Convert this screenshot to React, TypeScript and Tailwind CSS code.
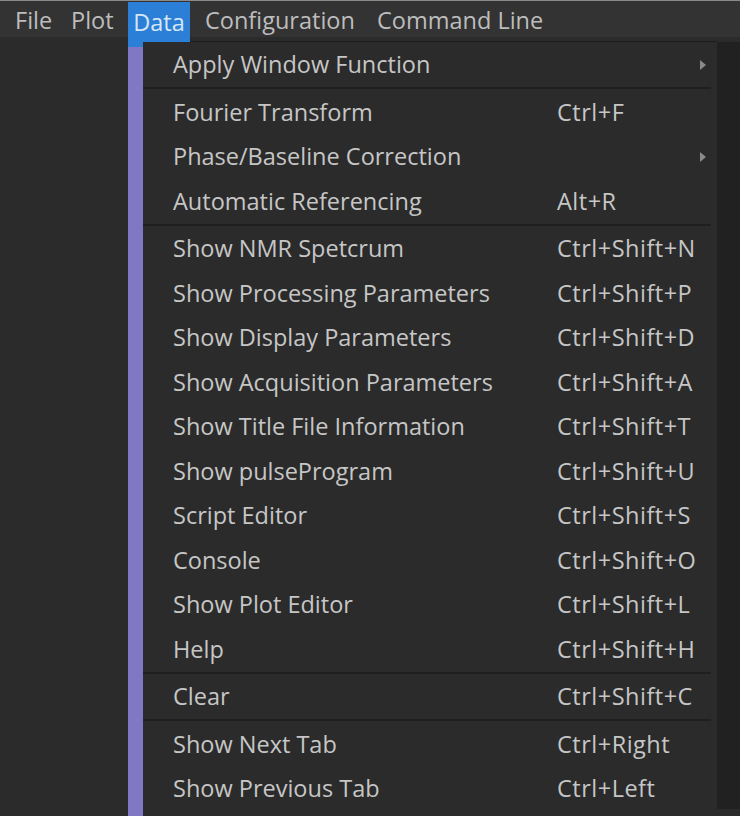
import React from 'react';

type Item = { label: string; shortcut?: string; submenu?: boolean };

const GROUPS: Item[][] = [
  [{ label: 'Apply Window Function', submenu: true }],
  [
    { label: 'Fourier Transform', shortcut: 'Ctrl+F' },
    { label: 'Phase/Baseline Correction', submenu: true },
    { label: 'Automatic Referencing', shortcut: 'Alt+R' },
  ],
  [
    { label: 'Show NMR Spetcrum', shortcut: 'Ctrl+Shift+N' },
    { label: 'Show Processing Parameters', shortcut: 'Ctrl+Shift+P' },
    { label: 'Show Display Parameters', shortcut: 'Ctrl+Shift+D' },
    { label: 'Show Acquisition Parameters', shortcut: 'Ctrl+Shift+A' },
    { label: 'Show Title File Information', shortcut: 'Ctrl+Shift+T' },
    { label: 'Show pulseProgram', shortcut: 'Ctrl+Shift+U' },
    { label: 'Script Editor', shortcut: 'Ctrl+Shift+S' },
    { label: 'Console', shortcut: 'Ctrl+Shift+O' },
    { label: 'Show Plot Editor', shortcut: 'Ctrl+Shift+L' },
    { label: 'Help', shortcut: 'Ctrl+Shift+H' },
  ],
  [{ label: 'Clear', shortcut: 'Ctrl+Shift+C' }],
  [
    { label: 'Show Next Tab', shortcut: 'Ctrl+Right' },
    { label: 'Show Previous Tab', shortcut: 'Ctrl+Left' },
  ],
];

const MenuRow: React.FC<{ item: Item }> = ({ item }) => (
  <div className="flex items-center h-[44.5px] pl-[30px] pr-[11px] pt-[1px]">
    <span className="w-[384px] shrink-0 whitespace-nowrap">{item.label}</span>
    <span className="flex-1 whitespace-nowrap tracking-[0.5px]">{item.shortcut}</span>
    {item.submenu && (
      <svg width="6" height="10" viewBox="0 0 6 10" className="shrink-0">
        <path d="M0 0 L6 5 L0 10 Z" fill="#8a8a8a" />
      </svg>
    )}
  </div>
);

const App: React.FC = () => {
  return (
    <div
      className="w-[740px] h-[816px] overflow-hidden bg-[#2b2b2b] text-[23.5px] text-[#c6c6c6] flex flex-col"
      style={{ fontFamily: '"Open Sans", "Noto Sans", sans-serif' }}
    >
      {/* menu bar */}
      <div className="h-[37px] shrink-0 border-t border-[#8a8a8a] bg-[#333333] flex items-start text-[#bdbdbd] whitespace-nowrap">
        <div className="h-[37px] w-[71px] flex items-center pl-[15px] pt-[3px]">File</div>
        <div className="h-[37px] w-[57px] flex items-center pt-[3px]">Plot</div>
        <div className="relative z-10 mt-[1px] h-[40px] w-[62px] flex items-center justify-center pt-[1px] bg-[#2b7fd6] text-[#d6e6f6]">
          Data
        </div>
        <div className="h-[37px] w-[187px] flex items-center pl-[15px] pt-[3px]">Configuration</div>
        <div className="h-[37px] flex items-center pt-[3px]">Command Line</div>
      </div>

      {/* dropdown area */}
      <div className="flex flex-1 min-h-0">
        <div className="w-[128px] shrink-0" />
        <div className="w-[15px] shrink-0 flex flex-col">
          <div className="h-[10px] bg-[#2b7fd6]" />
          <div className="flex-1 bg-[#8078c2]" />
        </div>
        <div className="mt-[4px] w-[574px] shrink-0 self-start bg-[#2b2b2b] border-t border-[#1c1c1c]">
          {GROUPS.map((group, gi) => (
            <div key={gi}>
              {gi > 0 && (
                <div className="h-[3px] flex items-center pr-[6px]">
                  <div className="h-[2px] w-full bg-[#1f1f1f]" />
                </div>
              )}
              {group.map((item) => (
                <MenuRow key={item.label} item={item} />
              ))}
            </div>
          ))}
        </div>
        <div className="mt-[5px] w-[23px] h-[767px] shrink-0 bg-[#212121]" />
      </div>
    </div>
  );
};

export default App;
